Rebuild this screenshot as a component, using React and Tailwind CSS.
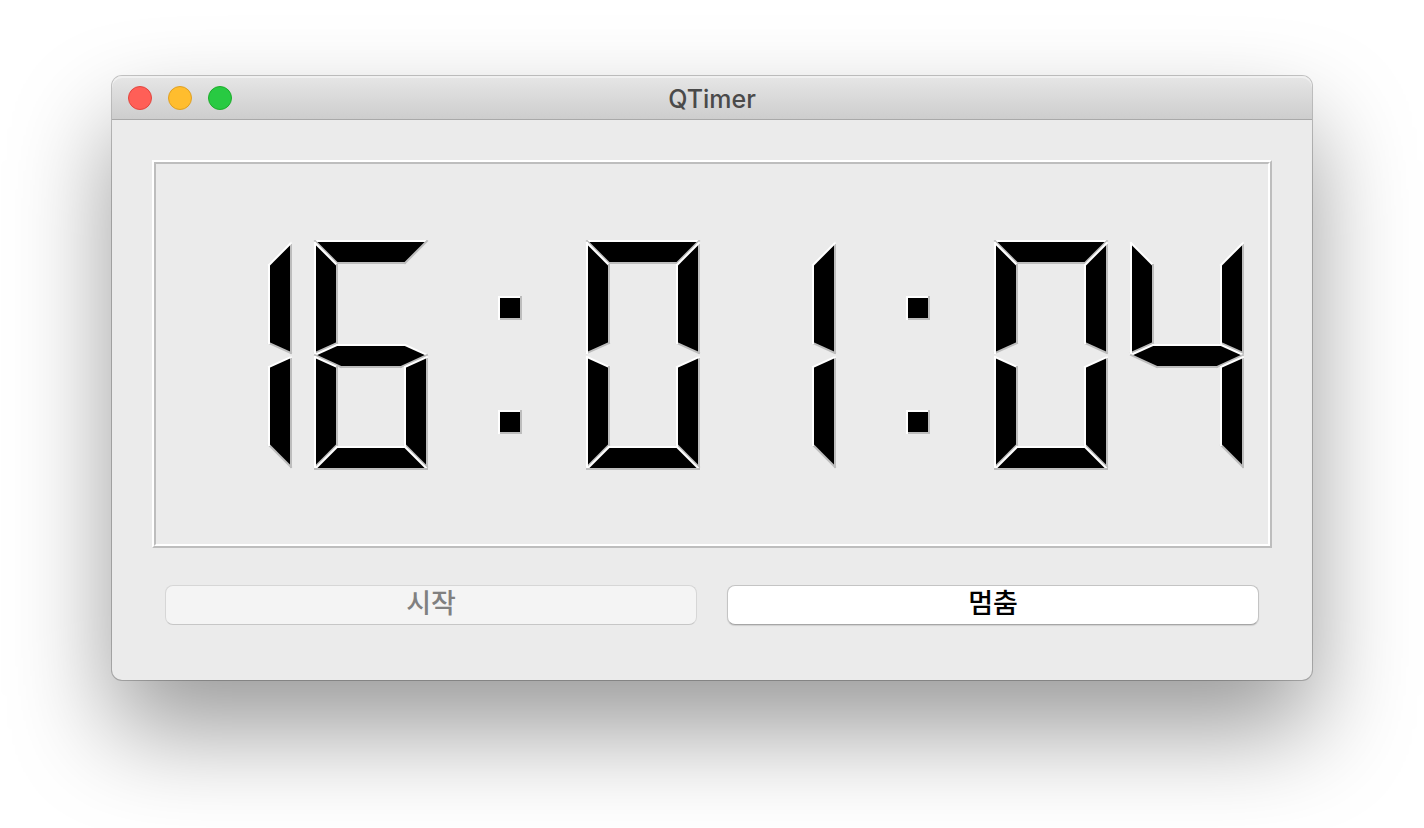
import { useState } from "react";
import clsx from "clsx";

const LIGHT = "#ffffff";
const DARK = "#bdbdbd";

const DIGIT_PITCH = 68;

// each segment: outline points, then the bevel colour of every edge (p0-p1, p1-p2, ...)
const SEGMENTS = {
  top: {
    points: [[0, 0], [56, 0], [45, 11], [11, 11]],
    edges: [LIGHT, DARK, DARK, DARK],
  },
  upperLeft: {
    points: [[0, 1], [11, 12], [11, 51], [0, 56]],
    edges: [LIGHT, DARK, DARK, LIGHT],
  },
  upperRight: {
    points: [[56, 1], [56, 56], [45, 51], [45, 12]],
    edges: [DARK, DARK, LIGHT, LIGHT],
  },
  middle: {
    points: [[0, 57], [11, 52], [45, 52], [56, 57], [43, 63], [13, 63]],
    edges: [LIGHT, LIGHT, LIGHT, DARK, DARK, DARK],
  },
  lowerLeft: {
    points: [[0, 58], [11, 63], [11, 102], [0, 113]],
    edges: [LIGHT, DARK, DARK, LIGHT],
  },
  lowerRight: {
    points: [[56, 58], [56, 113], [45, 102], [45, 63]],
    edges: [DARK, DARK, LIGHT, LIGHT],
  },
  bottom: {
    points: [[0, 114], [11, 103], [45, 103], [56, 114]],
    edges: [LIGHT, LIGHT, LIGHT, DARK],
  },
  colonTop: {
    points: [[24, 28], [35, 28], [35, 39], [24, 39]],
    edges: [LIGHT, DARK, DARK, LIGHT],
  },
  colonBottom: {
    points: [[24, 85], [35, 85], [35, 96], [24, 96]],
    edges: [LIGHT, DARK, DARK, LIGHT],
  },
};

const CHARACTERS = {
  0: ["top", "upperLeft", "upperRight", "lowerLeft", "lowerRight", "bottom"],
  1: ["upperRight", "lowerRight"],
  2: ["top", "upperRight", "middle", "lowerLeft", "bottom"],
  3: ["top", "upperRight", "middle", "lowerRight", "bottom"],
  4: ["upperLeft", "upperRight", "middle", "lowerRight"],
  5: ["top", "upperLeft", "middle", "lowerRight", "bottom"],
  6: ["top", "upperLeft", "middle", "lowerLeft", "lowerRight", "bottom"],
  7: ["top", "upperRight", "lowerRight"],
  8: ["top", "upperLeft", "upperRight", "middle", "lowerLeft", "lowerRight", "bottom"],
  9: ["top", "upperLeft", "upperRight", "middle", "lowerRight", "bottom"],
  ":": ["colonTop", "colonBottom"],
};

function Segment({ name }) {
  const { points, edges } = SEGMENTS[name];

  return (
    <g>
      <polygon points={points.map((p) => p.join(",")).join(" ")} fill="#000" />
      {edges.map((color, i) => {
        const [x1, y1] = points[i];
        const [x2, y2] = points[(i + 1) % points.length];
        return (
          <line
            key={i}
            x1={x1}
            y1={y1}
            x2={x2}
            y2={y2}
            stroke={color}
            strokeWidth="1"
            strokeLinecap="square"
          />
        );
      })}
    </g>
  );
}

function LcdNumber({ value }) {
  return (
    <div className="border-2 border-t-white border-l-white border-r-[#bdbdbd] border-b-[#bdbdbd]">
      <div className="border-2 border-t-[#bdbdbd] border-l-[#bdbdbd] border-r-white border-b-white pt-19 pr-6 pb-[74px] pl-[22px]">
        <svg
          viewBox="0 0 533 115"
          className="block w-full"
          role="img"
          aria-label={value}
        >
          {value.split("").map((char, i) => (
            <g key={i} transform={`translate(${i * DIGIT_PITCH + 0.5} 0.5)`}>
              {CHARACTERS[char].map((name) => (
                <Segment key={name} name={name} />
              ))}
            </g>
          ))}
        </svg>
      </div>
    </div>
  );
}

function TitleBar({ title }) {
  return (
    <header className="grid h-11 grid-cols-[1fr_auto_1fr] items-center rounded-t-[10px] bg-linear-to-b from-[#e6e6e6] to-[#cdcdcd] px-4 shadow-[inset_0_2px_0_#f0f0f0,inset_0_-1px_0_#a9a9a9]">
      <div className="flex gap-4">
        <button
          type="button"
          aria-label="닫기"
          className="size-6 rounded-full border border-[#e2463f] bg-[#ff5f57]"
        />
        <button
          type="button"
          aria-label="최소화"
          className="size-6 rounded-full border border-[#dfa023] bg-[#ffbd2e]"
        />
        <button
          type="button"
          aria-label="확대"
          className="size-6 rounded-full border border-[#1dad2b] bg-[#28ca42]"
        />
      </div>
      <h1 className="pt-0.5 font-['Inter','Noto_Sans_CJK_KR',sans-serif] text-[25px] leading-8 font-medium text-[#4a4a4a]">
        {title}
      </h1>
    </header>
  );
}

function PushButton({ disabled, onClick, children }) {
  return (
    <button
      type="button"
      disabled={disabled}
      onClick={onClick}
      className={clsx(
        "h-10 flex-1 rounded-lg border pb-1.5 text-[27px] leading-8 font-medium",
        disabled
          ? "border-[#d6d6d6] border-b-[#c6c6c6] bg-[#f4f4f4] text-[#808080]"
          : "border-[#c4c4c4] border-b-[#a6a6a6] bg-white text-black shadow-[0_1px_1px_rgba(0,0,0,0.12)]"
      )}
    >
      {children}
    </button>
  );
}

export default function App() {
  const [running, setRunning] = useState(true);

  return (
    <div className="min-h-screen bg-white px-28 pt-19 pb-37 font-['Noto_Sans_CJK_KR',sans-serif]">
      <main className="rounded-[10px] bg-[#ebebeb] shadow-[0_0_0_1px_rgba(0,0,0,0.22),0_50px_100px_rgba(0,0,0,0.4)]">
        <TitleBar title="QTimer" />
        <div className="px-10 pt-10 pb-[55px]">
          <LcdNumber value="16:01:04" />
          <div className="mt-[37px] flex gap-[30px] px-[13px]">
            <PushButton disabled={running} onClick={() => setRunning(true)}>
              시작
            </PushButton>
            <PushButton disabled={!running} onClick={() => setRunning(false)}>
              멈춤
            </PushButton>
          </div>
        </div>
      </main>
    </div>
  );
}
